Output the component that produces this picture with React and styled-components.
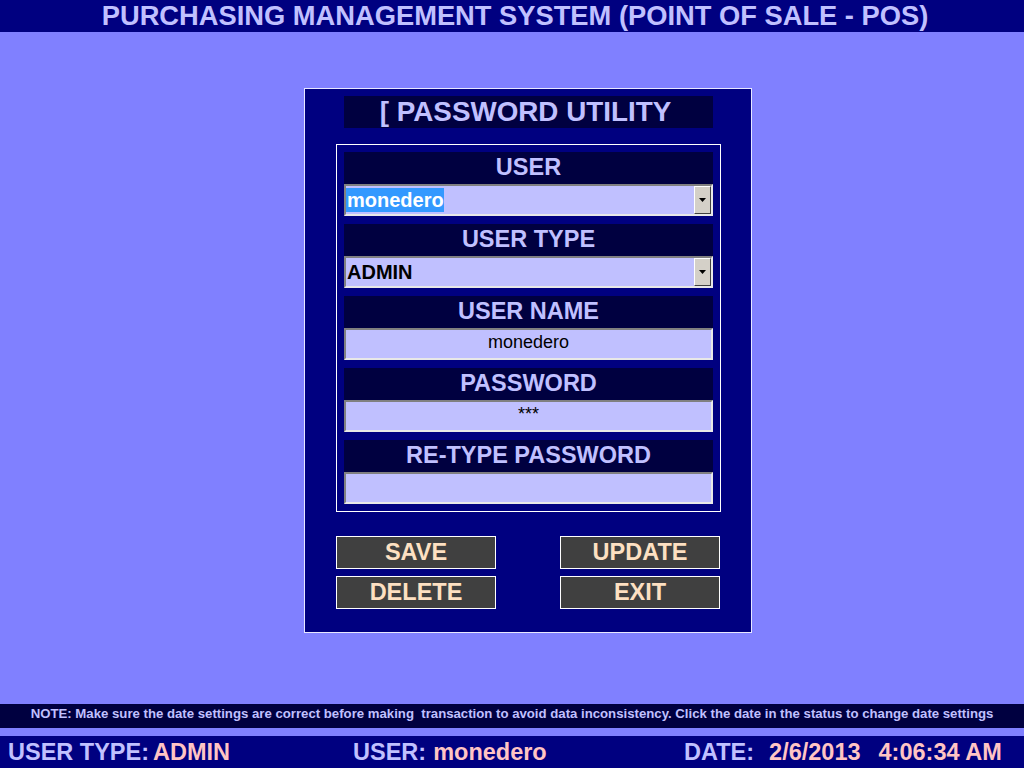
import React from 'react'
import styled, { createGlobalStyle } from 'styled-components'

const GlobalStyle = createGlobalStyle`
  html, body {
    margin: 0;
    padding: 0;
    background: #8080ff;
    font-family: 'Liberation Sans', Arial, sans-serif;
  }
`

const Screen = styled.div`
  display: flex;
  flex-direction: column;
  height: 100vh;
  background: #8080ff;
`

const TopBar = styled.header`
  height: 32px;
  line-height: 32px;
  background: #000080;
  color: #c0c0ff;
  font-size: 27.3px;
  font-weight: bold;
  text-align: center;
  white-space: nowrap;
  padding-left: 6px;
`

const Main = styled.main`
  flex: 1;
  padding: 56px 0 0 304px;
`

const Panel = styled.section`
  box-sizing: border-box;
  width: 448px;
  background: #000080;
  border: 1px solid #e8e8ff;
  padding: 7px 0 23px 31px;
`

const PanelTitle = styled.div`
  width: 369px;
  height: 32px;
  line-height: 32px;
  margin-left: 8px;
  padding-right: 6px;
  box-sizing: border-box;
  background: #000040;
  color: #c0c0ff;
  font-size: 27.8px;
  font-weight: bold;
  text-align: center;
`

const FieldBox = styled.div`
  box-sizing: border-box;
  width: 385px;
  margin-top: 16px;
  border: 1px solid #ffffff;
  padding: 7px;
  display: flex;
  flex-direction: column;
  gap: 8px;
`

const Field = styled.div`
  display: flex;
  flex-direction: column;
`

const Label = styled.div`
  height: 32px;
  line-height: 30px;
  background: #000040;
  color: #c0c0ff;
  font-size: 23.5px;
  font-weight: bold;
  text-align: center;
`

const Input = styled.div`
  box-sizing: border-box;
  height: 32px;
  display: flex;
  align-items: ${p => (p.$select ? 'center' : 'flex-start')};
  justify-content: ${p => (p.$select ? 'space-between' : 'center')};
  background: #c0c0ff;
  border-style: solid;
  border-width: 2px;
  border-color: #808080 #e8e8e8 #e8e8e8 #808080;
  color: #000000;
  font-size: ${p => (p.$select ? '20px' : '18px')};
  font-weight: ${p => (p.$select ? 'bold' : 'normal')};
  padding-top: ${p => (p.$select ? '0' : '2px')};
`

const SelectText = styled.span`
  padding-left: 1px;
  line-height: 24px;
  background: ${p => (p.$highlight ? '#3399ff' : 'transparent')};
  color: ${p => (p.$highlight ? '#ffffff' : '#000000')};
`

const DropButton = styled.span`
  box-sizing: border-box;
  width: 17px;
  height: 28px;
  display: flex;
  align-items: center;
  justify-content: center;
  background: #d4d0c8;
  border-style: solid;
  border-width: 1px;
  border-color: #ffffff #404040 #404040 #ffffff;
`

const ButtonGrid = styled.div`
  display: grid;
  grid-template-columns: 160px 160px;
  column-gap: 64px;
  row-gap: 7px;
  margin-top: 24px;
`

const Button = styled.button`
  box-sizing: border-box;
  height: 33px;
  padding: 0 0 2px;
  background: #404040;
  border: 1px solid #ffffff;
  color: #fde0c2;
  font-family: 'Liberation Sans', Arial, sans-serif;
  font-size: 23.5px;
  font-weight: bold;
  line-height: 28px;
  cursor: pointer;
`

const NoteBar = styled.div`
  box-sizing: border-box;
  height: 24px;
  line-height: 20px;
  margin-bottom: 8px;
  background: #000040;
  color: #c0c0ff;
  font-size: 13.2px;
  font-weight: bold;
  text-align: center;
  white-space: pre;
`

const StatusBar = styled.footer`
  height: 32px;
  line-height: 32px;
  background: #000080;
  padding-left: 8px;
  display: grid;
  grid-template-columns: 345px 331px auto;
  font-size: 23.5px;
  font-weight: bold;
  white-space: nowrap;
`

const Key = styled.span`
  color: #c0c0ff;
`

const Value = styled.span`
  color: #ffc4c4;
  margin-left: ${p => p.$gap || 0}px;
`

const Arrow = () => (
  <svg width="7" height="4" viewBox="0 0 7 4">
    <path d="M0 0h7L3.5 4z" fill="#000" />
  </svg>
)

const fields = [
  { label: 'USER', value: 'monedero', select: true, highlight: true },
  { label: 'USER TYPE', value: 'ADMIN', select: true },
  { label: 'USER NAME', value: 'monedero' },
  { label: 'PASSWORD', value: '***' },
  { label: 'RE-TYPE PASSWORD', value: '' },
]

const App = () => (
  <Screen>
    <GlobalStyle />
    <TopBar>PURCHASING MANAGEMENT SYSTEM (POINT OF SALE - POS)</TopBar>
    <Main>
      <Panel>
        <PanelTitle>[ PASSWORD UTILITY</PanelTitle>
        <FieldBox>
          {fields.map(f => (
            <Field key={f.label}>
              <Label>{f.label}</Label>
              {f.select ? (
                <Input $select>
                  <SelectText $highlight={f.highlight}>{f.value}</SelectText>
                  <DropButton><Arrow /></DropButton>
                </Input>
              ) : (
                <Input>{f.value}</Input>
              )}
            </Field>
          ))}
        </FieldBox>
        <ButtonGrid>
          <Button>SAVE</Button>
          <Button>UPDATE</Button>
          <Button>DELETE</Button>
          <Button>EXIT</Button>
        </ButtonGrid>
      </Panel>
    </Main>
    <NoteBar>NOTE: Make sure the date settings are correct before making  transaction to avoid data inconsistency. Click the date in the status to change date settings</NoteBar>
    <StatusBar>
      <span><Key>USER TYPE:</Key><Value $gap={4}>ADMIN</Value></span>
      <span><Key>USER:</Key><Value $gap={7}>monedero</Value></span>
      <span><Key>DATE:</Key><Value $gap={15}>2/6/2013</Value><Value $gap={18}>4:06:34 AM</Value></span>
    </StatusBar>
  </Screen>
)

export default App
